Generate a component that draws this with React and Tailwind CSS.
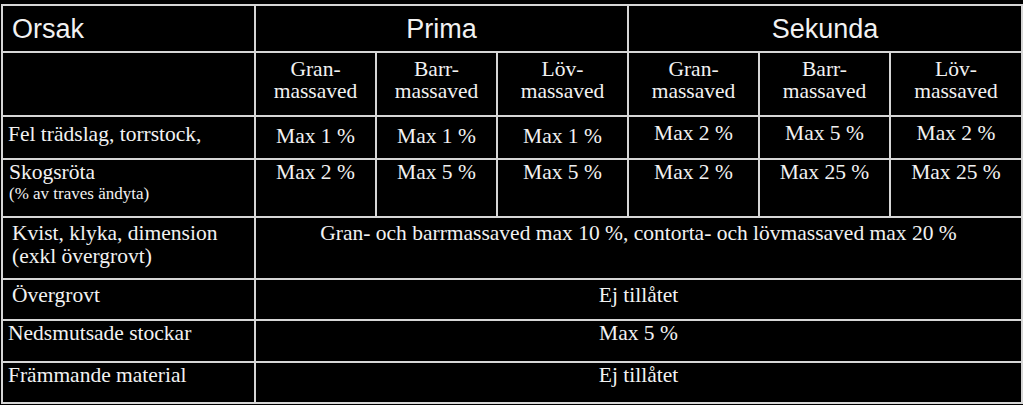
import React from "react";

const serif = "[font-family:'Liberation_Serif',serif] text-[21.5px] leading-[22px] text-[#f2f2f2]";
const sans = "[font-family:'Liberation_Sans',Arial,sans-serif] text-[27px] leading-[30px] text-[#f2f2f2]";

const subHeads = [
    ["Gran-", "massaved"],
    ["Barr-", "massaved"],
    ["Löv-", "massaved"],
    ["Gran-", "massaved"],
    ["Barr-", "massaved"],
    ["Löv-", "massaved"],
];

const felRow = ["Max 1 %", "Max 1 %", "Max 1 %", "Max 2 %", "Max 5 %", "Max 2 %"];
const rotaRow = ["Max 2 %", "Max 5 %", "Max 5 %", "Max 2 %", "Max 25 %", "Max 25 %"];

const wideRows = [
    { label: ["Kvist, klyka, dimension", "(exkl övergrovt)"], value: "Gran- och barrmassaved max 10 %, contorta- och lövmassaved max 20 %", pt: "pt-[4px]", indent: true },
    { label: ["Övergrovt"], value: "Ej tillåtet", pt: "pt-[4px]", indent: true },
    { label: ["Nedsmutsade stockar"], value: "Max 5 %", pt: "pt-[1px]" },
    { label: ["Främmande material"], value: "Ej tillåtet", pt: "pt-[1px]" },
];

const App = () => {
    return (
        <div className="w-full h-[405px] bg-black overflow-hidden">
            <div className="ml-[1px] mt-[4px] inline-grid grid-cols-[251px_119px_119px_129px_129px_129px_130px] grid-rows-[45px_62px_41px_56px_60px_39px_40px_39px] gap-[2px] p-[2px] bg-[#d6d6d6]">
                {/* header */}
                <div className={`bg-black flex items-center pl-[9px] ${sans}`}>Orsak</div>
                <div className={`bg-black col-span-3 flex items-center justify-center ${sans}`}>Prima</div>
                <div className={`bg-black col-span-3 flex items-center justify-center ${sans}`}>Sekunda</div>

                <div className="bg-black"></div>
                {subHeads.map((h, i) => (
                    <div key={i} className={`bg-black text-center pt-[5px] ${serif}`}>
                        <div>{h[0]}</div>
                        <div>{h[1]}</div>
                    </div>
                ))}

                <div className={`bg-black pl-[5px] pt-[6px] ${serif}`}>Fel trädslag, torrstock,</div>
                {felRow.map((v, i) => (
                    <div key={i} className={`bg-black text-center ${i < 3 ? "pt-[8px]" : "pt-[5px]"} ${serif}`}>{v}</div>
                ))}

                <div className={`bg-black pl-[6px] pt-[1px] ${serif}`}>
                    <div>Skogsröta</div>
                    <div className="text-[17px] leading-[22px]">(% av traves ändyta)</div>
                </div>
                {rotaRow.map((v, i) => (
                    <div key={i} className={`bg-black text-center pt-[1px] ${serif}`}>{v}</div>
                ))}

                {wideRows.map((r, i) => (
                    <React.Fragment key={i}>
                        <div className={`bg-black ${r.indent ? "pl-[9px]" : "pl-[5px]"} ${r.pt} ${serif} leading-[23px]`}>
                            {r.label.map((l, j) => (
                                <div key={j}>{l}</div>
                            ))}
                        </div>
                        <div className={`bg-black col-span-6 text-center ${r.pt} ${serif}`}>{r.value}</div>
                    </React.Fragment>
                ))}
            </div>
        </div>
    );
};

export default App;
